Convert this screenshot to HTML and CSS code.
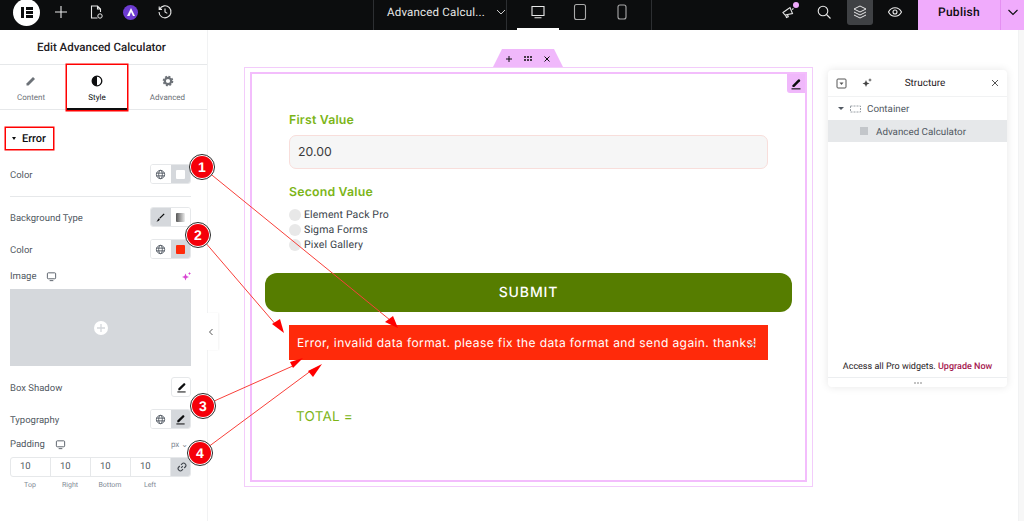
FILE: index.html
```html
<!DOCTYPE html>
<html lang="en">

<head>
    <meta charset="UTF-8">
    <meta name="viewport" content="width=device-width, initial-scale=1.0">
    <title>Edit Advanced Calculator</title>
    <link rel="stylesheet" href="styles.css">
</head>

<body>
    <svg class="sprite" width="0" height="0">
        <symbol id="pen" viewBox="0 0 12 12">
            <path d="M2.5 7.2 8.2 1.500a1 1 0 0 1 1.400 0l.4.4a1 1 0 0 1 0 1.400L4.300 9H2.500z" fill="currentColor" />
            <rect x="1.500" y="10.300" width="9" height="1.100" fill="currentColor" />
        </symbol>
        <symbol id="brush" viewBox="0 0 12 12">
            <path d="M4.800 6.200 9.500 1.500l1 1-4.700 4.700z" fill="currentColor" />
            <path d="M4.300 6.700 5.300 7.700C5 9.500 3.500 10.500 1.500 10.300 2.800 9.700 2.800 7.500 4.300 6.700z" fill="currentColor" />
        </symbol>
        <symbol id="globe" viewBox="0 0 12 12">
            <g fill="none" stroke="currentColor" stroke-width="1">
                <circle cx="6" cy="6" r="4.5" />
                <ellipse cx="6" cy="6" rx="2" ry="4.5" />
                <path d="M1.5 4.5h9M1.5 7.5h9" />
            </g>
        </symbol>
        <symbol id="monitor" viewBox="0 0 12 12">
            <g fill="none" stroke="currentColor" stroke-width="1">
                <rect x="1.5" y="2" width="9" height="6.5" rx="1" />
                <path d="M4 10.5h4" />
            </g>
        </symbol>
    </svg>

    <header class="topbar">
        <div class="top-left">
            <div class="logo">
                <span class="logo-bar"></span>
                <span class="logo-lines"><i></i><i></i><i></i></span>
            </div>
            <svg class="top-icon" viewBox="0 0 16 16"><path d="M8 2v12M2 8h12" stroke="#e8e8e8" stroke-width="1.1" /></svg>
            <svg class="top-icon" viewBox="0 0 16 16">
                <path d="M9.5 14H3.5V2h6l3 3v3M9.5 2v3h3" fill="none" stroke="#e8e8e8" stroke-width="1.1" />
                <circle cx="12" cy="12" r="2.2" fill="none" stroke="#e8e8e8" stroke-width="1" />
            </svg>
            <div class="avatar">
                <svg width="10" height="10" viewBox="0 0 10 10"><path d="M1 9 5 1l4 8H7L5 5 3.6 9z" fill="#fff" /></svg>
            </div>
            <svg class="top-icon" viewBox="0 0 16 16">
                <path d="M2.6 5.2A6 6 0 1 1 2 8M2.2 2.6v2.8H5M8 4.6V8l2.3 1.4" fill="none" stroke="#e8e8e8" stroke-width="1.1" />
            </svg>
        </div>
        <div class="doc-title">
            <span>Advanced Calcul...</span>
            <svg width="10" height="10" viewBox="0 0 10 10"><path d="M1 3l4 4 4-4" fill="none" stroke="#ccc" stroke-width="1" /></svg>
        </div>
        <div class="devices">
            <div class="device active">
                <svg width="16" height="16" viewBox="0 0 16 16"><path d="M2 2.5h12v9H2zM4.5 13.7h7" fill="none" stroke="#e8e8e8" stroke-width="1.1" /></svg>
            </div>
            <div class="device">
                <svg width="16" height="18" viewBox="0 0 16 18"><rect x="2.5" y="1.5" width="11" height="15" rx="2" fill="none" stroke="#aaa" stroke-width="1.1" /></svg>
            </div>
            <div class="device">
                <svg width="12" height="16" viewBox="0 0 12 16"><rect x="2" y="1" width="8" height="14" rx="2" fill="none" stroke="#aaa" stroke-width="1.1" /></svg>
            </div>
        </div>
        <div class="top-right">
            <div class="top-tool notice">
                <svg class="top-icon" viewBox="0 0 16 16">
                    <path d="M3 8.5 10 3.5l2.5 6L5 11zM5.5 11l1 2.5 1.8-.8-.8-2M12 5.500l1.500-1" fill="none" stroke="#e8e8e8" stroke-width="1.1" />
                </svg>
                <span class="notice-dot"></span>
            </div>
            <div class="top-tool">
                <svg class="top-icon" viewBox="0 0 16 16">
                    <circle cx="7" cy="7" r="4.8" fill="none" stroke="#e8e8e8" stroke-width="1.1" />
                    <path d="M10.5 10.5 14.5 14.5" stroke="#e8e8e8" stroke-width="1.1" />
                </svg>
            </div>
            <div class="top-tool selected">
                <svg class="top-icon" viewBox="0 0 16 16">
                    <path d="M8 2 14 5 8 8 2 5zM2 8l6 3 6-3M2 11l6 3 6-3" fill="none" stroke="#e8e8e8" stroke-width="1" />
                </svg>
            </div>
            <div class="top-tool">
                <svg class="top-icon" viewBox="0 0 16 16">
                    <path d="M1.5 8C3 5 5.3 3.7 8 3.7S13 5 14.5 8C13 11 10.700 12.300 8 12.300S3 11 1.500 8z" fill="none" stroke="#e8e8e8" stroke-width="1.1" />
                    <circle cx="8" cy="8" r="2" fill="none" stroke="#e8e8e8" stroke-width="1.1" />
                </svg>
            </div>
            <div class="publish">Publish</div>
            <div class="publish-more">
                <svg width="12" height="12" viewBox="0 0 12 12"><path d="M1.500 4 6 8.500 10.500 4" fill="none" stroke="#0c0d0e" stroke-width="1.100" /></svg>
            </div>
        </div>
    </header>

    <div class="main">
        <aside class="sidebar">
            <div class="side-title">Edit Advanced Calculator</div>
            <div class="tabs">
                <div class="tab">
                    <svg class="tab-icon" viewBox="0 0 12 12"><path d="M1.500 8.500 8 2l2 2-6.500 6.500h-2z" fill="currentColor" /></svg>
                    <span>Content</span>
                </div>
                <div class="tab current">
                    <svg class="tab-icon" viewBox="0 0 12 12">
                        <circle cx="6" cy="6" r="4.800" fill="none" stroke="currentColor" stroke-width="1.300" />
                        <path d="M6 1.200a4.800 4.800 0 0 0 0 9.600z" fill="currentColor" />
                    </svg>
                    <span>Style</span>
                </div>
                <div class="tab">
                    <svg class="tab-icon" viewBox="0 0 12 12">
                        <circle cx="6" cy="6" r="3.200" fill="none" stroke="currentColor" stroke-width="2.200" />
                        <circle cx="6" cy="6" r="4.600" fill="none" stroke="currentColor" stroke-width="1.400" stroke-dasharray="2 1.600" />
                    </svg>
                    <span>Advanced</span>
                </div>
            </div>

            <div class="panel">
                <div class="section-head"><span class="caret"></span>Error</div>

                <div class="row row-first">
                    <span>Color</span>
                    <div class="switch">
                        <button class="sw"><svg class="sw-icon"><use href="#globe" /></svg></button>
                        <button class="sw on"><span class="swatch white"></span></button>
                    </div>
                </div>
                <hr class="divider">
                <div class="row">
                    <span>Background Type</span>
                    <div class="switch">
                        <button class="sw on dark"><svg class="sw-icon"><use href="#brush" /></svg></button>
                        <button class="sw"><span class="swatch fade"></span></button>
                    </div>
                </div>
                <div class="row row-color">
                    <span>Color</span>
                    <div class="switch">
                        <button class="sw"><svg class="sw-icon"><use href="#globe" /></svg></button>
                        <button class="sw on"><span class="swatch red"></span></button>
                    </div>
                </div>
                <div class="label-row image-label">
                    <span>Image</span>
                    <svg class="small-icon"><use href="#monitor" /></svg>
                    <svg class="sparkle" width="9" height="9" viewBox="0 0 9 9"><path d="M3.500 1.500l1 2.500 2.500 1-2.500 1-1 2.500-1-2.500L0 5l2.500-1zM7.500 0l.5 1 1 .5-1 .5-.5 1-.5-1-1-.5 1-.5z" fill="#d946d2" /></svg>
                </div>
                <div class="image-box">
                    <span class="image-add">
                        <svg width="8" height="8" viewBox="0 0 8 8"><path d="M4 0v8M0 4h8" stroke="#d5d8dc" stroke-width="1.300" /></svg>
                    </span>
                </div>
                <div class="row row-shadow">
                    <span>Box Shadow</span>
                    <button class="single"><svg class="sw-icon"><use href="#pen" /></svg></button>
                </div>
                <div class="row row-type">
                    <span>Typography</span>
                    <div class="switch">
                        <button class="sw"><svg class="sw-icon"><use href="#globe" /></svg></button>
                        <button class="sw on dark"><svg class="sw-icon"><use href="#pen" /></svg></button>
                    </div>
                </div>
                <div class="label-row padding-label">
                    <span>Padding</span>
                    <svg class="small-icon"><use href="#monitor" /></svg>
                    <span class="unit">px ⌄</span>
                </div>
                <div class="dims">
                    <div class="dim">10</div>
                    <div class="dim">10</div>
                    <div class="dim">10</div>
                    <div class="dim">10</div>
                    <div class="dim link">
                        <svg width="10" height="10" viewBox="0 0 10 10"><path d="M4.200 5.800 5.800 4.200M4 2.800l1-1a1.800 1.800 0 0 1 3.200 3.200l-1 1M6 7.200l-1 1A1.800 1.800 0 0 1 1.800 5l1-1" fill="none" stroke="#3f444b" stroke-width="1.100" /></svg>
                    </div>
                </div>
                <div class="dim-labels">
                    <span>Top</span><span>Right</span><span>Bottom</span><span>Left</span><span></span>
                </div>
            </div>
            <div class="collapse">
                <svg width="6" height="8" viewBox="0 0 6 8"><path d="M4.500 1 1.500 4l3 3" fill="none" stroke="#555" stroke-width="1" /></svg>
            </div>
        </aside>

        <main class="canvas">
            <div class="frame">
                <div class="frame-handle">
                    <svg width="8" height="8" viewBox="0 0 8 8"><path d="M4 1v6M1 4h6" stroke="#0c0d0e" stroke-width="1" /></svg>
                    <svg width="10" height="8" viewBox="0 0 10 8"><path d="M1 2h2M4 2h2M7 2h2M1 5h2M4 5h2M7 5h2" stroke="#0c0d0e" stroke-width="1.300" /></svg>
                    <svg width="8" height="8" viewBox="0 0 8 8"><path d="M1.500 1.500l5 5M6.500 1.500l-5 5" stroke="#0c0d0e" stroke-width="1" /></svg>
                </div>
                <div class="widget">
                    <button class="widget-edit"><svg width="12" height="12"><use href="#pen" /></svg></button>
                    <form class="calc">
                        <label class="calc-label">First Value</label>
                        <div class="calc-input">20.00</div>
                        <label class="calc-label second">Second Value</label>
                        <div class="radios">
                            <div class="radio"><span class="dot"></span>Element Pack Pro</div>
                            <div class="radio"><span class="dot"></span>Sigma Forms</div>
                            <div class="radio"><span class="dot"></span>Pixel Gallery</div>
                        </div>
                        <div class="submit">SUBMIT</div>
                        <div class="error">
                            Error, invalid data format. please fix the data format and send again. thanks!
                            <svg class="error-close" width="9" height="9" viewBox="0 0 9 9"><path d="M1 1l7 7M8 1 1 8" stroke="#b3a09d" stroke-width="1" /></svg>
                        </div>
                        <div class="total">TOTAL =</div>
                    </form>
                </div>
            </div>

            <section class="structure">
                <div class="st-head">
                    <svg width="11" height="11" viewBox="0 0 11 11">
                        <rect x="1" y="1" width="9" height="9" rx="1" fill="none" stroke="#555" stroke-width="1" />
                        <path d="M3.500 4.500h4L5.500 7z" fill="#555" />
                    </svg>
                    <svg class="st-ai" width="10" height="10" viewBox="0 0 10 10"><path d="M4 2l1 2.500L7.500 5.500 5 6.500 4 9 3 6.500.5 5.500 3 4.500zM8 0l.5 1.500L10 2l-1.500.5L8 4l-.5-1.500L6 2l1.500-.5z" fill="#444" /></svg>
                    <span class="st-title">Structure</span>
                    <svg width="8" height="8" viewBox="0 0 8 8"><path d="M1 1l6 6M7 1 1 7" stroke="#555" stroke-width="1" /></svg>
                </div>
                <div class="st-row">
                    <span class="st-caret"></span>
                    <svg width="11" height="8" viewBox="0 0 11 8"><rect x=".5" y="1" width="10" height="6" fill="none" stroke="#9aa0a6" stroke-width="1" stroke-dasharray="2 1" /></svg>
                    <span class="st-name">Container</span>
                </div>
                <div class="st-row st-selected">
                    <span class="st-widget-icon"></span>
                    <span class="st-name">Advanced Calculator</span>
                </div>
                <div class="st-fill"></div>
                <div class="st-promo">Access all Pro widgets. <b>Upgrade Now</b></div>
                <div class="st-foot">
                    <svg width="8" height="2" viewBox="0 0 8 2"><path d="M0 1h2M3 1h2M6 1h2" stroke="#888" stroke-width="1.200" /></svg>
                </div>
            </section>
            <div class="scroll-track"></div>
        </main>
    </div>

    <!-- numbered callouts drawn over the whole screen -->
    <svg class="callouts" width="1024" height="521" viewBox="0 0 1024 521">
        <g stroke="#f8403a" stroke-width="1" fill="none">
            <path d="M202 167 390 320" />
            <path d="M198 234 277 326" />
            <path d="M203 406 295 365" />
            <path d="M200 453 312 370" />
        </g>
        <g fill="#ff0000">
            <path d="M398 328 385 322 393 316z" />
            <path d="M284 333 272 324 280 319z" />
            <path d="M303 358 290 362 293 368z" />
            <path d="M322 364 308 371 313 377z" />
        </g>
        <g class="badge">
            <circle class="ring" cx="202" cy="167" r="12.500" />
            <circle cx="202" cy="167" r="11" />
            <text x="202" y="172">1</text>
            <circle class="ring" cx="198" cy="235" r="12.500" />
            <circle cx="198" cy="235" r="11" />
            <text x="198" y="240">2</text>
            <circle class="ring" cx="203" cy="406" r="12.500" />
            <circle cx="203" cy="406" r="11" />
            <text x="203" y="411">3</text>
            <circle class="ring" cx="200" cy="453" r="12.500" />
            <circle cx="200" cy="453" r="11" />
            <text x="200" y="458">4</text>
        </g>
    </svg>
</body>

</html>
```

FILE: styles.css
```css
* {
    box-sizing: border-box;
}

body {
    margin: 0;
    width: 1024px;
    height: 521px;
    overflow: hidden;
    position: relative;
    background: #fff;
    font-family: 'Roboto', sans-serif;
    color: #0c0d0e;
    text-rendering: geometricPrecision;
}

button {
    padding: 0;
    font: inherit;
    border: none;
    background: none;
}

.sprite {
    position: absolute;
}

/* top bar */
.topbar {
    height: 30px;
    background: #0c0d0e;
    display: flex;
    align-items: center;
    color: #e8e8e8;
}

.top-left {
    width: 373px;
    height: 30px;
    display: flex;
    align-items: center;
    padding: 0 0 6px 13px;
    gap: 19px;
}

.top-icon {
    width: 16px;
    height: 16px;
    display: block;
}

.logo {
    width: 27px;
    height: 27px;
    margin-right: -6px;
    flex-shrink: 0;
    border-radius: 50%;
    background: #fff;
    display: flex;
    align-items: center;
    justify-content: center;
    gap: 2px;
}

.logo-bar {
    width: 3px;
    height: 11px;
    background: #0c0d0e;
}

.logo-lines {
    display: flex;
    flex-direction: column;
    gap: 1px;
}

.logo-lines i {
    width: 7px;
    height: 3px;
    background: #0c0d0e;
}

.avatar {
    width: 15px;
    height: 15px;
    border-radius: 50%;
    background: #6d3bd1;
    display: flex;
    align-items: center;
    justify-content: center;
}

.doc-title {
    width: 134px;
    height: 30px;
    padding: 0 0 6px 13px;
    display: flex;
    align-items: center;
    gap: 11px;
    white-space: nowrap;
    font-size: 11.500px;
    letter-spacing: .2px;
    border-left: 1px solid #2d2f32;
    border-right: 1px solid #2d2f32;
}

.devices {
    width: 145px;
    height: 30px;
    display: flex;
    padding-left: 10px;
    border-right: 1px solid #2d2f32;
}

.device {
    width: 42px;
    height: 30px;
    padding-bottom: 6px;
    display: flex;
    align-items: center;
    justify-content: center;
}

.device.active {
    padding-bottom: 4px;
    border-bottom: 2px solid #fff;
}

.top-right {
    flex: 1;
    height: 30px;
    display: flex;
    align-items: center;
    justify-content: flex-end;
}

.top-tool {
    width: 26px;
    height: 30px;
    margin-right: 10px;
    padding-bottom: 6px;
    display: flex;
    align-items: center;
    justify-content: center;
    position: relative;
}

.top-tool.selected {
    height: 25px;
    align-self: flex-start;
    margin-right: 9px;
    padding-bottom: 1px;
    border-radius: 0 0 3px 3px;
    background: #3f4144;
}

.notice-dot {
    position: absolute;
    top: 2px;
    right: 2px;
    width: 6px;
    height: 6px;
    border-radius: 50%;
    background: #f0abfc;
}

.publish {
    width: 82px;
    height: 30px;
    line-height: 24px;
    text-align: center;
    font-size: 12px;
    font-weight: 500;
    letter-spacing: .3px;
    color: #0c0d0e;
    background: #f0abfc;
}

.publish-more {
    width: 24px;
    height: 30px;
    padding-bottom: 6px;
    display: flex;
    align-items: center;
    justify-content: center;
    background: #f0abfc;
    border-left: 1px solid #e58ff2;
}

/* layout below the bar */
.main {
    display: flex;
    height: 491px;
}

.sidebar {
    width: 208px;
    height: 491px;
    position: relative;
    border-right: 1px solid #f1f2f3;
}

.side-title {
    height: 35px;
    line-height: 35px;
    padding-right: 4px;
    text-align: center;
    font-size: 11.500px;
    font-weight: 500;
    color: #1f2124;
    border-bottom: 1px solid #e6e8ea;
}

.tabs {
    height: 45px;
    display: grid;
    grid-template-columns: 62px 62px 1fr;
    column-gap: 4px;
    border-bottom: 1px solid #e6e8ea;
}

.tab {
    display: flex;
    flex-direction: column;
    align-items: center;
    padding-top: 10px;
    gap: 6px;
    font-size: 8px;
    color: #6d7278;
}

.tab:last-child {
    margin-left: -4px;
}

.tab-icon {
    width: 12px;
    height: 12px;
    display: block;
}

.tab.current {
    color: #0c0d0e;
    height: 45px;
    margin: 0 1px;
    border-bottom: 2px solid #0c0d0e;
    box-shadow: 0 0 0 1.500px #f00;
}

.panel {
    padding: 18px 16px 0 10px;
    font-size: 9.500px;
    color: #515962;
}

.section-head {
    width: 47px;
    height: 21px;
    margin-left: -4px;
    padding-left: 6px;
    display: flex;
    align-items: center;
    gap: 6px;
    font-size: 11px;
    font-weight: 500;
    color: #0c0d0e;
    box-shadow: 0 0 0 1.500px #f00;
}

.caret {
    border-left: 2.500px solid transparent;
    border-right: 2.500px solid transparent;
    border-top: 3px solid #0c0d0e;
}

.row {
    height: 20px;
    display: flex;
    align-items: center;
    justify-content: space-between;
}

.row > span {
    padding-top: 2px;
}

.row-first {
    margin-top: 15px;
}

.row-color {
    margin-top: 12px;
}

.row-shadow {
    margin-top: 11px;
}

.row-type {
    margin-top: 12px;
}

.divider {
    height: 1px;
    margin: 12px 0 10px;
    border: none;
    background: #e6e8ea;
}

.switch {
    width: 41px;
    height: 20px;
    display: flex;
    border-radius: 3px;
    border: 1px solid #e6e8ea;
    overflow: hidden;
}

.sw {
    flex: 1;
    display: flex;
    align-items: center;
    justify-content: center;
    color: #515962;
    background: #fff;
}

.sw.on {
    background: #d5d8dc;
}

.sw.dark {
    color: #0c0d0e;
}

.sw-icon {
    width: 11px;
    height: 11px;
    display: block;
}

.swatch {
    width: 9px;
    height: 9px;
    border-radius: 1px;
}

.swatch.white {
    background: #fff;
}

.swatch.red {
    background: #ff2a0a;
}

.swatch.fade {
    background: linear-gradient(90deg, #555, #eee);
}

.single {
    width: 20px;
    height: 20px;
    display: flex;
    align-items: center;
    justify-content: center;
    color: #0c0d0e;
    border: 1px solid #e6e8ea;
    border-radius: 3px;
}

.label-row {
    display: flex;
    align-items: center;
    gap: 10px;
}

.image-label {
    height: 14px;
    margin-top: 10px;
}

.small-icon {
    width: 11px;
    height: 11px;
}

.sparkle {
    margin-left: auto;
}

.image-box {
    width: 181px;
    height: 77px;
    margin-top: 6px;
    display: flex;
    align-items: center;
    justify-content: center;
    background: #d5d8dc;
}

.image-add {
    width: 14px;
    height: 14px;
    border-radius: 50%;
    background: #fff;
    display: flex;
    align-items: center;
    justify-content: center;
}

.padding-label {
    height: 14px;
    margin-top: 8px;
}

.unit {
    margin-left: auto;
    font-size: 8px;
    color: #818a96;
    padding-right: 3px;
}

.dims {
    margin-top: 6px;
    height: 20px;
    display: grid;
    grid-template-columns: 40px 40px 40px 40px 21px;
    border: 1px solid #e6e8ea;
    border-radius: 3px;
    overflow: hidden;
}

.dim {
    padding-left: 9px;
    line-height: 18px;
    font-size: 9.500px;
    color: #515962;
    border-right: 1px solid #e6e8ea;
}

.dim.link {
    padding: 0;
    display: flex;
    align-items: center;
    justify-content: center;
    border: none;
    background: #d5d8dc;
}

.dim-labels {
    margin-top: 4px;
    display: grid;
    grid-template-columns: 40px 40px 40px 40px 21px;
    text-align: center;
    font-size: 7px;
    color: #818a96;
}

.collapse {
    position: absolute;
    top: 283px;
    right: -11px;
    width: 11px;
    height: 37px;
    padding-right: 3px;
    display: flex;
    align-items: center;
    justify-content: center;
    background: #fff;
    box-shadow: 1px 0 2px rgba(0, 0, 0, 0.05);
}

/* canvas */
.canvas {
    flex: 1;
    position: relative;
    padding: 38px 0 0 36px;
}

.frame {
    width: 569px;
    height: 420px;
    margin-top: -1px;
    padding: 4px 5px;
    position: relative;
    border: 1px solid #f3ccfb;
}

.frame-handle {
    position: absolute;
    top: -19px;
    left: 248px;
    width: 70px;
    height: 18px;
    padding: 2px 12px 0;
    display: flex;
    align-items: center;
    justify-content: space-between;
    background: #f0b8fb;
    clip-path: polygon(9px 0, 61px 0, 70px 100%, 0 100%);
}

.widget {
    height: 100%;
    position: relative;
    border: 2px solid #f3bdfc;
}

.widget-edit {
    position: absolute;
    top: 0;
    right: 0;
    width: 18px;
    height: 19px;
    display: flex;
    align-items: center;
    justify-content: center;
    background: #f0b8fb;
    color: #0c0d0e;
    border-radius: 0 0 0 3px;
}

.calc {
    padding: 38px 0 0 37px;
    font-family: 'Inter', sans-serif;
}

.calc-label {
    display: block;
    height: 16px;
    line-height: 16px;
    font-size: 12.300px;
    font-weight: 600;
    letter-spacing: .2px;
    color: #7cb518;
}

.calc-input {
    width: 479px;
    height: 34px;
    margin-top: 7px;
    padding-left: 8px;
    line-height: 32px;
    font-size: 12.300px;
    color: #3a3a3a;
    background: #f6f6f6;
    border: 1px solid #f8dedb;
    border-radius: 7px;
}

.second {
    margin-top: 15px;
}

.radios {
    margin-top: 7px;
}

.radio {
    height: 15px;
    display: flex;
    align-items: center;
    gap: 3px;
    font-family: 'Roboto', sans-serif;
    font-size: 10.500px;
    letter-spacing: .15px;
    color: #3a3f4a;
}

.dot {
    width: 12px;
    height: 12px;
    border-radius: 50%;
    background: #e8e8e8;
}

.submit {
    width: 527px;
    height: 39px;
    margin: 21px 0 0 -24px;
    line-height: 39px;
    text-align: center;
    font-size: 14px;
    font-weight: 500;
    letter-spacing: .9px;
    color: #fff;
    background: #567d00;
    border-radius: 12px;
}

.error {
    width: 479px;
    height: 35px;
    margin-top: 13px;
    padding-left: 8px;
    position: relative;
    line-height: 35px;
    white-space: nowrap;
    font-size: 12px;
    letter-spacing: .4px;
    color: #fff;
    background: #ff2a0a;
}

.error-close {
    position: absolute;
    top: 15px;
    right: 12px;
}

.total {
    margin: 49px 0 0 7px;
    font-size: 13.500px;
    letter-spacing: .2px;
    color: #7cb518;
}

/* structure panel */
.structure {
    position: absolute;
    top: 40px;
    left: 620px;
    width: 179px;
    height: 317px;
    display: flex;
    flex-direction: column;
    background: #fff;
    border-radius: 4px;
    box-shadow: 0 0 8px rgba(0, 0, 0, 0.1);
    font-size: 9.800px;
    color: #515962;
}

.st-head {
    height: 27px;
    padding: 0 8px;
    display: flex;
    align-items: center;
    color: #1f2124;
    border-bottom: 1px solid #f1f2f3;
}

.st-ai {
    margin-left: 15px;
}

.st-title {
    flex: 1;
    text-align: center;
    padding: 1px 13px 0 0;
    font-size: 10px;
}

.st-row {
    height: 23px;
    padding-left: 10px;
    display: flex;
    align-items: center;
    gap: 6px;
}

.st-name {
    padding-top: 2px;
}

.st-caret {
    border-left: 3px solid transparent;
    border-right: 3px solid transparent;
    border-top: 3.500px solid #515962;
}

.st-selected {
    height: 22px;
    padding-left: 32px;
    gap: 8px;
    background: #e6e8ea;
}

.st-widget-icon {
    width: 8px;
    height: 8px;
    background: #c3c6ca;
}

.st-fill {
    flex: 1;
}

.st-promo {
    padding-bottom: 5px;
    text-align: center;
    font-size: 9px;
    color: #1f2124;
}

.st-promo b {
    font-weight: 500;
    color: #a6194f;
}

.st-foot {
    height: 10px;
    display: flex;
    align-items: center;
    justify-content: center;
    border-top: 1px solid #eceef0;
}

.scroll-track {
    position: absolute;
    top: 0;
    right: 0;
    width: 6px;
    height: 100%;
    background: #f7f7f7;
    border-left: 1px solid #f1f2f3;
}

/* callouts */
.callouts {
    position: absolute;
    top: 0;
    left: 0;
}

.badge circle {
    fill: #f5000a;
}

.badge .ring {
    fill: #fff;
    stroke: #2a2a2a;
    stroke-width: 1;
}

.badge text {
    fill: #fff;
    font-family: 'Liberation Sans', sans-serif;
    font-size: 14px;
    font-weight: 700;
    text-anchor: middle;
}
```
